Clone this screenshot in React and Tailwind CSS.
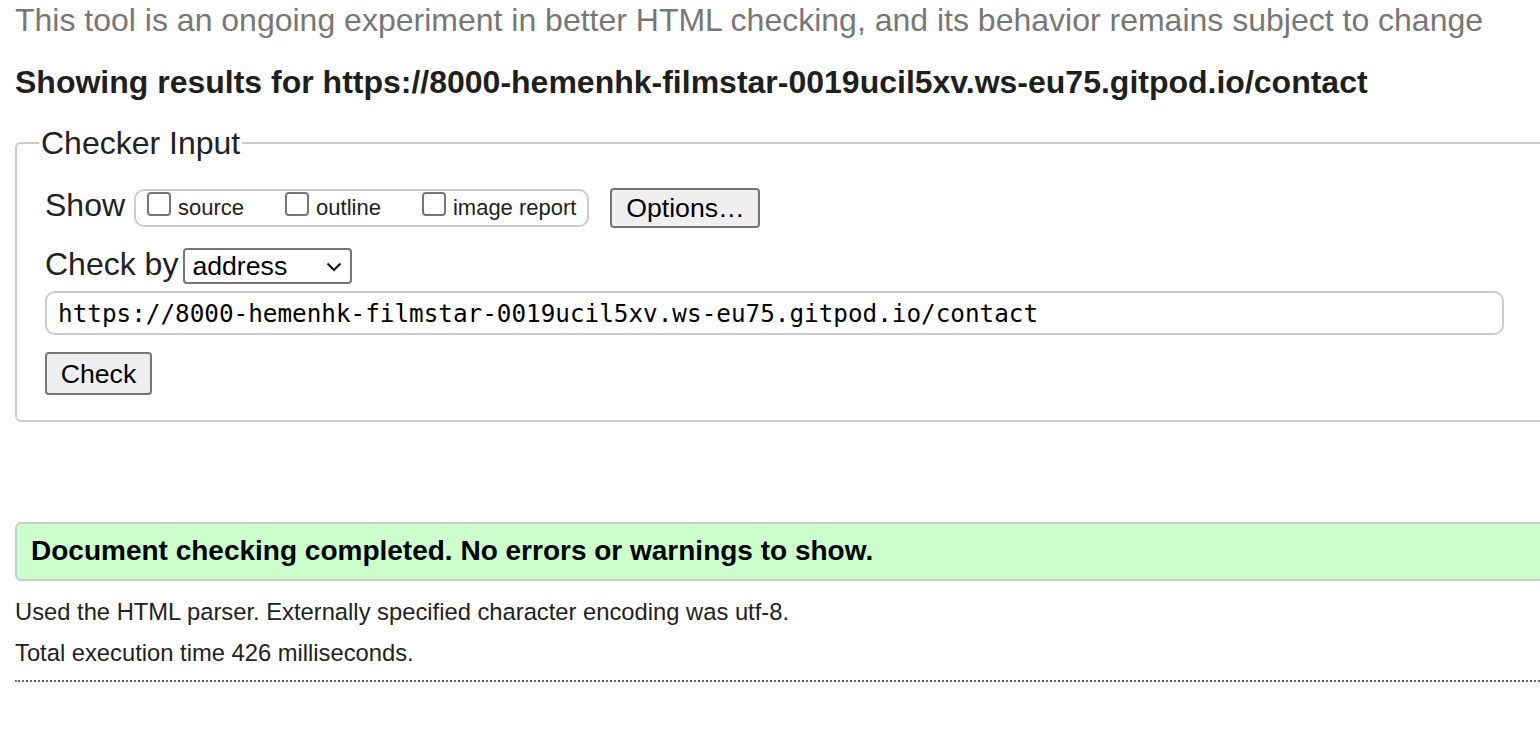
import React from "react";

function Box({ label, first }) {
  return (
    <div className={`flex items-start ${first ? "" : "ml-[41px]"}`}>
      <span className="mt-[1px] block w-[24px] h-[24px] border-2 border-[#767676] rounded-[4px] bg-white" />
      <span className="ml-[7px] mt-[4px] text-[22px] leading-[26px] text-[#222] whitespace-nowrap">{label}</span>
    </div>
  );
}

export default function App() {
  return (
    <div className="w-[1540px] h-[732px] overflow-hidden bg-white font-['Liberation_Sans',Arial,sans-serif]">
      <div className="w-[1640px] pl-[15px]">
        <p className="pt-[1px] text-[32px] leading-[38px] text-[#777] whitespace-nowrap">
          This tool is an ongoing experiment in better HTML checking, and its behavior remains subject to change
        </p>
        <h2 className="mt-[24px] text-[32px] leading-[38px] font-bold text-[#1f1f1f] whitespace-nowrap">
          Showing results for https://8000-hemenhk-filmstar-0019ucil5xv.ws-eu75.gitpod.io/contact
        </h2>
        <fieldset className="mt-[24px] border-2 border-[#ccc] rounded-[6px] pl-[22px] pt-[27px] pb-[25px]">
          <legend className="px-[2px] text-[32px] leading-[36px] text-[#222]">Checker Input</legend>
          <div className="pl-[6px] flex flex-col">
            <div className="flex items-start h-[40px]">
              <span className="text-[32px] leading-[34px] text-[#222]">Show</span>
              <div className="ml-[9px] mt-[1px] h-[38px] border-2 border-[#ccc] rounded-[10px] flex items-start pl-[11px] pr-[11px]">
                <Box label="source" first />
                <Box label="outline" />
                <Box label="image report" />
              </div>
              <div className="ml-[21px] w-[150px] h-[40px] border-2 border-[#767676] rounded-[4px] bg-[#efefef] flex items-center justify-center text-[26.67px] text-black">
                Options…
              </div>
            </div>
            <div className="mt-[19px] flex items-start h-[37px]">
              <span className="text-[32px] leading-[34px] text-[#222]">Check by</span>
              <div className="ml-[5px] mt-[1px] w-[169px] h-[36px] border-2 border-[#767676] rounded-[4px] bg-white flex items-center justify-between pl-[7px] pr-[8px]">
                <span className="text-[26.67px] leading-[30px] text-black">address</span>
                <svg width="16" height="10" viewBox="0 0 16 10" className="mt-[2px]">
                  <path d="M1.5 1.5 L8 8 L14.5 1.5" fill="none" stroke="#111" strokeWidth="2" />
                </svg>
              </div>
            </div>
            <div className="mt-[7px] w-[1459px] h-[44px] border-2 border-[#ccc] rounded-[10px] pl-[11px] pt-[7px] flex items-start">
              <span className="text-[24.3px] leading-[28px] text-black whitespace-nowrap font-['DejaVu_Sans_Mono',monospace]">
                https://8000-hemenhk-filmstar-0019ucil5xv.ws-eu75.gitpod.io/contact
              </span>
            </div>
            <div className="mt-[17px] w-[107px] h-[43px] border-2 border-[#767676] rounded-[4px] bg-[#efefef] flex items-center justify-center text-[26.67px] text-black">
              Check
            </div>
          </div>
        </fieldset>
        <div className="mt-[100px] border-2 border-[#ccc] rounded-l-[6px] bg-[#ccffcc] pl-[14px] pt-[11px] pb-[12px]">
          <span className="text-[28px] leading-[32px] font-bold text-black">
            Document checking completed. No errors or warnings to show.
          </span>
        </div>
        <p className="mt-[17px] text-[23.75px] leading-[28px] text-[#222]">
          Used the HTML parser. Externally specified character encoding was utf-8.
        </p>
        <p className="mt-[13px] text-[23.75px] leading-[28px] text-[#222]">
          Total execution time 426 milliseconds.
        </p>
        <div className="mt-[13px] border-t-2 border-dotted border-[#666]" />
      </div>
    </div>
  );
}
